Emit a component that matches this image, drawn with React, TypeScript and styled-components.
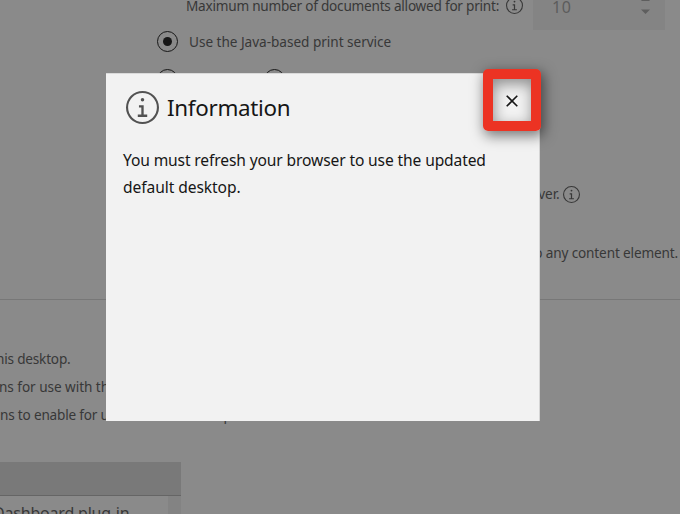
import React from 'react';
import styled, { createGlobalStyle } from 'styled-components';

const GlobalStyle = createGlobalStyle`
  * { box-sizing: border-box; }
  body { margin: 0; overflow: hidden; font-family: "Noto Sans", "Open Sans", sans-serif; }
`;

const Page = styled.div`
  position: relative;
  width: 680px;
  height: 514px;
  overflow: hidden;
  background: #8a8a8a;
  color: #383838;
`;

const Settings = styled.main`
  display: flex;
  flex-direction: column;
`;

const Row = styled.div<{ $height: number; $shift?: number; $right?: number; $end?: boolean }>`
  display: flex;
  align-items: center;
  flex: none;
  justify-content: ${p => (p.$end ? 'flex-end' : 'flex-start')};
  height: ${p => p.$height}px;
  margin-left: ${p => p.$shift ?? 0}px;
  padding-right: ${p => p.$right ?? 0}px;
`;

const Label = styled.span<{ $spacing?: number }>`
  font-size: 13.6px;
  line-height: 20px;
  white-space: nowrap;
  letter-spacing: ${p => p.$spacing ?? 0}px;
`;

const PrintLimit = styled.div`
  display: flex;
  height: 30px;
  padding-left: 186px;
`;

const LimitLabel = styled.div`
  display: flex;
  width: 311px;
  margin-top: -4px;
`;

const LimitHelp = styled.div`
  width: 36px;
  padding-left: 9px;
  margin-top: -3px;
`;

const NumberField = styled.div`
  display: flex;
  justify-content: space-between;
  width: 132px;
  height: 30px;
  padding: 0 15px 0 19px;
  background: #848484;
  color: #5c5c5c;
  font-size: 16px;
  line-height: 14px;
  letter-spacing: 0.6px;
`;

const Radio = styled.span<{ $checked?: boolean }>`
  display: flex;
  align-items: center;
  justify-content: center;
  flex: none;
  width: 21px;
  height: 21px;
  border: 1px solid #171717;
  border-radius: 50%;
  &::after {
    content: "";
    width: 9px;
    height: 9px;
    border-radius: 50%;
    background: ${p => (p.$checked ? '#171717' : 'transparent')};
  }
`;

const PrintOption = styled.div`
  display: flex;
  align-items: flex-start;
  gap: 11px;
  height: 24px;
  padding: 1px 0 0 157px;

  ${Label} {
    margin-top: 1px;
  }
`;

const RadioPair = styled.div`
  display: flex;
  gap: 86px;
  height: 21px;
  margin-top: 15px;
  padding-left: 157px;
`;

const Divider = styled.hr`
  width: 100%;
  height: 1px;
  margin: 0;
  border: 0;
  background: #777;
`;

const PluginTable = styled.section`
  width: 181px;
  height: 53px;
  background: #8a8a8a;
`;

const TableHead = styled.div`
  height: 34px;
  background: #797979;
  border-bottom: 1px solid #656565;
`;

const TableBody = styled.div`
  display: grid;
  grid-template-columns: 168px 13px;
  height: 19px;
`;

const TableCell = styled.div`
  font-size: 16px;
  line-height: 34px;
  white-space: nowrap;
  letter-spacing: -0.2px;
  text-indent: -7px;
`;

const ScrollTrack = styled.div`
  background: #838383;
`;

const Dialog = styled.section`
  position: absolute;
  left: 106px;
  top: 73px;
  width: 434px;
  height: 348px;
  padding: 17px 17px;
  background: #f2f2f2;
  border-top: 1px solid #dadada;
  border-right: 1px solid #d5d5d5;
  color: #161616;
`;

const DialogHeader = styled.header`
  display: flex;
  align-items: center;
  gap: 8px;
  height: 33px;
  padding-left: 3px;
  color: #525252;
`;

const DialogTitle = styled.h1`
  margin: 1px 0 0;
  color: #161616;
  font-size: 22.4px;
  font-weight: 400;
  line-height: 32px;
  letter-spacing: -0.3px;
`;

const Message = styled.p`
  margin: 23px 0 0;
  font-size: 15.6px;
  line-height: 27px;
  white-space: nowrap;
`;

const MessageLine = styled.span<{ $spacing: number }>`
  display: block;
  letter-spacing: ${p => p.$spacing}px;
`;

const CloseHighlight = styled.button`
  position: absolute;
  left: 483px;
  top: 69px;
  display: flex;
  align-items: center;
  justify-content: center;
  width: 58px;
  height: 62px;
  padding: 2px 0 0;
  border: 10px solid #ec3323;
  border-radius: 5px;
  background: transparent;
  box-shadow: 2px 4px 13px 1px rgba(0, 0, 0, 0.5), inset 1px 5px 14px rgba(0, 0, 0, 0.42);
  color: #161616;
`;

const Icon = styled.svg`
  display: block;
  flex: none;
`;

function InfoIcon({ size }: { size: number }) {
  return (
    <Icon width={size} height={size} viewBox="0 0 28 28" fill="currentColor">
      <path d="M15 20V12H11v2h2v6h-3v2h8v-2zM14 6a1.5 1.5 0 1 0 0 3 1.5 1.5 0 0 0 0-3Z" />
      <path d="M14 28a14 14 0 1 1 0-28 14 14 0 0 1 0 28Zm0-26.2a12.2 12.2 0 1 0 0 24.4 12.2 12.2 0 0 0 0-24.4Z" />
    </Icon>
  );
}

export default function App() {
  return (
    <>
      <GlobalStyle />
      <Page>
        <Settings>
          <PrintLimit>
            <LimitLabel><Label $spacing={-0.23}>Maximum number of documents allowed for print:</Label></LimitLabel>
            <LimitHelp><InfoIcon size={17} /></LimitHelp>
            <NumberField>
              10
              <Icon width="9" height="15" viewBox="0 0 9 15" fill="#5e5e5e">
                <path d="M0 1 4.5-4 9 1ZM0 9.5h9L4.5 14Z" />
              </Icon>
            </NumberField>
          </PrintLimit>
          <PrintOption><Radio $checked /><Label $spacing={-0.03}>Use the Java-based print service</Label></PrintOption>
          <RadioPair><Radio /><Radio /></RadioPair>
          <Row $height={90} />
          <Row $height={28} $end $right={100}>
            <Label $spacing={-0.1}>server.&nbsp;</Label><InfoIcon size={17} />
          </Row>
          <Row $height={31} />
          <Row $height={28} $end $right={2}><Label $spacing={-0.15}>to any content element.</Label></Row>
          <Row $height={32} />
          <Divider />
          <Row $height={45} />
          <Row $height={28} $shift={-4}><Label $spacing={-0.2}>his desktop.</Label></Row>
          <Row $height={28} $shift={-1}><Label $spacing={-0.05}>ns for use with this desktop.</Label></Row>
          <Row $height={28}><Label $spacing={-0.2}>ns to enable for use with this desktop.</Label></Row>
          <Row $height={33} />
          <PluginTable>
            <TableHead />
            <TableBody><TableCell>Dashboard plug-in</TableCell><ScrollTrack /></TableBody>
          </PluginTable>
        </Settings>
        <Dialog>
          <DialogHeader><InfoIcon size={33} /><DialogTitle>Information</DialogTitle></DialogHeader>
          <Message>
            <MessageLine $spacing={-0.13}>You must refresh your browser to use the updated</MessageLine>
            <MessageLine $spacing={-0.08}>default desktop.</MessageLine>
          </Message>
        </Dialog>
        <CloseHighlight aria-label="Close">
          <Icon width="12" height="12" viewBox="0 0 12 12" stroke="currentColor" strokeWidth="1.6">
            <path d="m.7.7 10.6 10.6M11.3.7.7 11.3" />
          </Icon>
        </CloseHighlight>
      </Page>
    </>
  );
}
